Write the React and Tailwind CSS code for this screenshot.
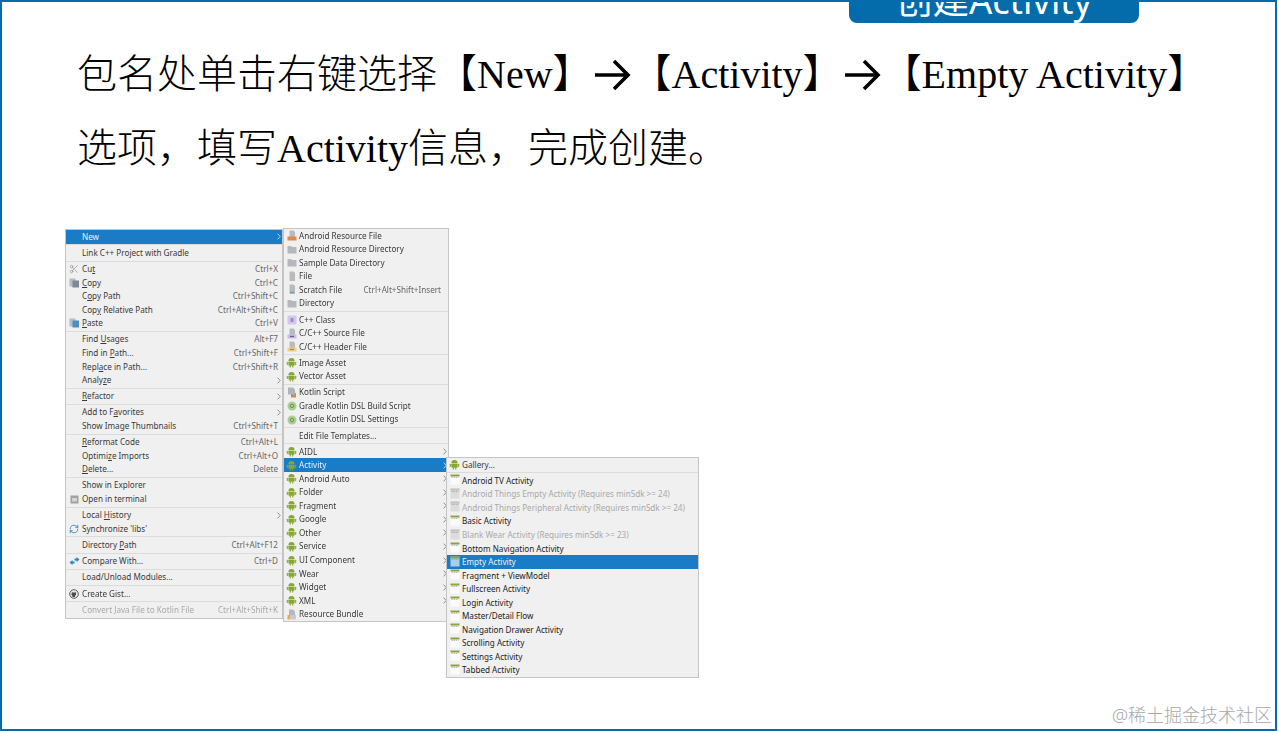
import { Scissors, RefreshCw } from "lucide-react";

const menuFont = { fontFamily: '"Noto Sans", "Liberation Sans", sans-serif' };

function Android() {
  return (
    <svg width="11" height="11" viewBox="0 0 11 11">
      <path d="M2.4 4.2a3.1 3.1 0 0 1 6.2 0z" fill="#84a832" />
      <rect x="2.4" y="4.7" width="6.2" height="4" rx="0.6" fill="#84a832" />
      <rect x="0.8" y="4.7" width="1.1" height="3.2" rx="0.5" fill="#84a832" />
      <rect x="9.1" y="4.7" width="1.1" height="3.2" rx="0.5" fill="#84a832" />
      <rect x="3.7" y="8.4" width="1.2" height="2.2" rx="0.5" fill="#84a832" />
      <rect x="6.1" y="8.4" width="1.2" height="2.2" rx="0.5" fill="#84a832" />
    </svg>
  );
}

function Template({ tone = "green" }) {
  const top = tone === "gray" ? "#c4c4c4" : "#8ba23e";
  const body = tone === "blue" ? "#a9cdea" : tone === "gray" ? "#dcdcdc" : "#fbfbfb";
  return (
    <svg width="10" height="11" viewBox="0 0 10 11" className="-mt-[2px]">
      <rect x="0.5" y="0.5" width="9" height="10" fill={body} />
      <rect x="0.5" y="0.5" width="9" height="2" fill={top} />
      <path d="M1.500 3.400h7" stroke="#9a9a9a" strokeWidth="0.700" strokeDasharray="1.500 0.700" />
    </svg>
  );
}

function Folder() {
  return (
    <svg width="10" height="9" viewBox="0 0 10 9">
      <path d="M0.500 1h3.400l1 1h4.600v6.500h-9z" fill="#b4b8bc" />
    </svg>
  );
}

function FileIcon({ bar, label }) {
  return (
    <svg width="10" height="11" viewBox="0 0 10 11">
      <path d="M2.500 0.500h4l1.500 1.500v8h-5.500z" fill="#b8babc" />
      {bar && <rect x="0.500" y="6.500" width="9" height="4" fill={bar} />}
      {label && <rect x="3" y="7.800" width="4" height="1.300" fill={label} />}
    </svg>
  );
}

function ClassIcon() {
  return (
    <svg width="10" height="10" viewBox="0 0 10 10">
      <rect x="0.500" y="0.500" width="9" height="9" rx="0.800" fill="#d5c8ee" />
      <rect x="3.500" y="3" width="3" height="4" fill="#8a70b8" opacity="0.700" />
    </svg>
  );
}

function GradleIcon() {
  return (
    <svg width="10" height="10" viewBox="0 0 10 10">
      <circle cx="5" cy="5" r="4.500" fill="#a9cf8f" />
      <circle cx="5" cy="5" r="1.700" fill="none" stroke="#5f7f55" strokeWidth="0.800" />
    </svg>
  );
}

function CopyIcon({ tone }) {
  return (
    <svg width="11" height="10" viewBox="0 0 11 10">
      <rect x="0.500" y="0.500" width="6" height="8" fill="#b6bcc2" />
      <rect x="3.500" y="2.500" width="6.500" height="7" fill={tone} />
    </svg>
  );
}

function TerminalIcon() {
  return (
    <svg width="9" height="9" viewBox="0 0 9 9">
      <rect x="0.500" y="0.500" width="8" height="8" fill="#a0a0a0" />
      <rect x="2" y="3" width="5" height="3.500" fill="#d4d4d4" />
    </svg>
  );
}

function CompareIcon() {
  return (
    <svg width="11" height="10" viewBox="0 0 11 10">
      <path d="M0.500 6.500l3-2.500v1.500h2v2h-2v1.500z" fill="#2b86d0" />
      <path d="M10.500 3.500l-3 2.500v-1.500h-2v-2h2v-1.500z" fill="#2b86d0" />
    </svg>
  );
}

function GistIcon() {
  return (
    <svg width="10" height="10" viewBox="0 0 10 10">
      <circle cx="5" cy="5" r="4.300" fill="#e8e8e8" stroke="#4a4a4a" strokeWidth="0.900" />
      <path d="M3 3l0.700 0.600h2.600l0.700-0.600v2.700l-1 1v1.300h-2.600v-1.300l-1-1z" fill="#4a4a4a" />
    </svg>
  );
}

function KotlinIcon() {
  return (
    <svg width="10" height="11" viewBox="0 0 10 11">
      <path d="M1 0.500h5l2 2v5h-7z" fill="#b0b4b8" />
      <path d="M4 10.500l5-5v5z" fill="#e8833a" />
      <path d="M4 10.500l3-3h-3z" fill="#4a8fd0" />
    </svg>
  );
}

function BundleIcon() {
  return (
    <svg width="10" height="11" viewBox="0 0 10 11">
      <path d="M2 0.500h4l2 2v4h-6z" fill="#b4b8bc" />
      <rect x="0.500" y="6" width="3" height="4.500" fill="#e7a85c" />
      <rect x="3.500" y="6" width="5.500" height="4.500" fill="#c5c9cd" />
    </svg>
  );
}

function Chevron({ active }) {
  return (
    <svg width="4" height="7" viewBox="0 0 4 7" className="shrink-0">
      <path d="M0.600 0.600l2.600 2.900-2.600 2.900" fill="none" stroke={active ? "#d5e6f5" : "#777"} strokeWidth="0.800" />
    </svg>
  );
}

// "_" marks the letter that gets the mnemonic underline
function Label({ text }) {
  const i = text.indexOf("_");
  if (i < 0) return <span>{text}</span>;
  return (
    <span>
      {text.slice(0, i)}
      <span className="underline underline-offset-1">{text[i + 1]}</span>
      {text.slice(i + 2)}
    </span>
  );
}

function Row({ item, textLeft }) {
  const { label, key2, keyPad, sub, icon, active, off, dark } = item;
  const color = active ? "text-[#e8f1f9]" : off ? "text-[#a9a9a9]" : dark ? "text-[#222222]" : "text-[#3a3a3a]";
  return (
    <div className={`flex items-center h-[13.55px] whitespace-nowrap ${color} ${active ? "bg-[#1a7cc6]" : ""}`}>
      <div className="flex items-center justify-center shrink-0" style={{ width: textLeft }}>
        {icon}
      </div>
      <Label text={label} />
      <div className="flex-1" />
      {key2 && (
        <span className={`${keyPad ? "pr-[7px]" : "pr-[4px]"} ${off ? "text-[#a9a9a9]" : "text-[#666666]"}`}>{key2}</span>
      )}
      {sub && (
        <div className="pr-[1px] pl-[1px]">
          <Chevron active={active} />
        </div>
      )}
    </div>
  );
}

function Menu({ items, textLeft, sepClass = "h-[2.55px]", className }) {
  return (
    <div
      className={`bg-[#f0f0f0] border border-[#c4c4c4] text-[8.15px] leading-none shrink-0 ${className}`}
      style={menuFont}
    >
      {items.map((item, idx) =>
        item === "-" ? (
          <div key={idx} className={`${sepClass} flex items-center`}>
            <div className="w-full h-[1px] bg-[#dcdcdc]" />
          </div>
        ) : (
          <Row key={idx} item={item} textLeft={textLeft} />
        )
      )}
    </div>
  );
}

const menuOne = [
  { label: "New", sub: true, active: true },
  "-",
  { label: "Link C++ Project with Gradle" },
  "-",
  { label: "Cu_t", key2: "Ctrl+X", icon: <Scissors size={10} color="#8a8a8a" strokeWidth={1.5} /> },
  { label: "_Copy", key2: "Ctrl+C", icon: <CopyIcon tone="#7c8a96" /> },
  { label: "C_opy Path", key2: "Ctrl+Shift+C" },
  { label: "Cop_y Relative Path", key2: "Ctrl+Alt+Shift+C" },
  { label: "_Paste", key2: "Ctrl+V", icon: <CopyIcon tone="#4d8fc4" /> },
  "-",
  { label: "Find _Usages", key2: "Alt+F7" },
  { label: "Find in _Path...", key2: "Ctrl+Shift+F" },
  { label: "Repl_ace in Path...", key2: "Ctrl+Shift+R" },
  { label: "Analy_ze", sub: true },
  "-",
  { label: "_Refactor", sub: true },
  "-",
  { label: "Add to F_avorites", sub: true },
  { label: "Show Image Thumbnails", key2: "Ctrl+Shift+T" },
  "-",
  { label: "_Reformat Code", key2: "Ctrl+Alt+L" },
  { label: "Optimi_ze Imports", key2: "Ctrl+Alt+O" },
  { label: "_Delete...", key2: "Delete" },
  "-",
  { label: "Show in Explorer" },
  { label: "Open in terminal", icon: <TerminalIcon /> },
  "-",
  { label: "Local _History", sub: true },
  { label: "Synchronize 'libs'", icon: <RefreshCw size={10} color="#2f7fc4" strokeWidth={2} /> },
  "-",
  { label: "Directory _Path", key2: "Ctrl+Alt+F12" },
  "-",
  { label: "Compare With...", key2: "Ctrl+D", icon: <CompareIcon /> },
  "-",
  { label: "Load/Unload Modules..." },
  "-",
  { label: "Create Gist...", icon: <GistIcon /> },
  "-",
  { label: "Convert Java File to Kotlin File", key2: "Ctrl+Alt+Shift+K", off: true },
];

const android = <Android />;

const menuTwo = [
  { label: "Android Resource File", icon: <FileIcon bar="#e08a4a" /> },
  { label: "Android Resource Directory", icon: <Folder /> },
  { label: "Sample Data Directory", icon: <Folder /> },
  { label: "File", icon: <FileIcon /> },
  { label: "Scratch File", key2: "Ctrl+Alt+Shift+Insert", keyPad: true, icon: <FileIcon label="#5a9fd0" /> },
  { label: "Directory", icon: <Folder /> },
  "-",
  { label: "C++ Class", icon: <ClassIcon /> },
  { label: "C/C++ Source File", icon: <FileIcon bar="#c9bce6" label="#6a5a9a" /> },
  { label: "C/C++ Header File", icon: <FileIcon bar="#f0cf85" label="#a98a3a" /> },
  "-",
  { label: "Image Asset", icon: android },
  { label: "Vector Asset", icon: android },
  "-",
  { label: "Kotlin Script", icon: <KotlinIcon /> },
  { label: "Gradle Kotlin DSL Build Script", icon: <GradleIcon /> },
  { label: "Gradle Kotlin DSL Settings", icon: <GradleIcon /> },
  "-",
  { label: "Edit File Templates..." },
  "-",
  { label: "AIDL", sub: true, icon: android },
  { label: "Activity", sub: true, active: true, icon: android },
  { label: "Android Auto", sub: true, icon: android },
  { label: "Folder", sub: true, icon: android },
  { label: "Fragment", sub: true, icon: android },
  { label: "Google", sub: true, icon: android },
  { label: "Other", sub: true, icon: android },
  { label: "Service", sub: true, icon: android },
  { label: "UI Component", sub: true, icon: android },
  { label: "Wear", sub: true, icon: android },
  { label: "Widget", sub: true, icon: android },
  { label: "XML", sub: true, icon: android },
  { label: "Resource Bundle", icon: <BundleIcon /> },
];

const green = <Template />;
const grayed = <Template tone="gray" />;

const menuThree = [
  { label: "Gallery...", icon: android },
  "-",
  { label: "Android TV Activity", icon: green, dark: true },
  { label: "Android Things Empty Activity (Requires minSdk >= 24)", icon: grayed, off: true },
  { label: "Android Things Peripheral Activity (Requires minSdk >= 24)", icon: grayed, off: true },
  { label: "Basic Activity", icon: green, dark: true },
  { label: "Blank Wear Activity (Requires minSdk >= 23)", icon: grayed, off: true },
  { label: "Bottom Navigation Activity", icon: green, dark: true },
  { label: "Empty Activity", icon: <Template tone="blue" />, active: true },
  { label: "Fragment + ViewModel", icon: green, dark: true },
  { label: "Fullscreen Activity", icon: green, dark: true },
  { label: "Login Activity", icon: green, dark: true },
  { label: "Master/Detail Flow", icon: green, dark: true },
  { label: "Navigation Drawer Activity", icon: green, dark: true },
  { label: "Scrolling Activity", icon: green, dark: true },
  { label: "Settings Activity", icon: green, dark: true },
  { label: "Tabbed Activity", icon: green, dark: true },
];

function Arrow() {
  return (
    <svg width="39" height="40" viewBox="0 0 39 40" className="inline-block align-[-7px]">
      <path d="M2 20h32M21 6l14 14-14 14" fill="none" stroke="#000" strokeWidth="3.600" />
    </svg>
  );
}

export default function App() {
  return (
    <div className="relative w-[1277px] h-[731px] bg-white border-2 border-[#046cab] overflow-hidden">
      {/* section tab, cut off by the top of the slide */}
      <div className="flex justify-end pr-[136px] -mt-[2px]">
        <div
          className="w-[290px] h-[23px] bg-[#046cab] rounded-b-[8px] overflow-hidden flex justify-center items-end text-white text-[36.5px] leading-none pb-[5px]"
          style={{ fontFamily: '"Noto Sans", "Noto Sans CJK SC", sans-serif' }}
        >
          <span className="whitespace-nowrap">创建Activity</span>
        </div>
      </div>

      <div
        className="pl-[75px] pt-[15px] text-[40px] leading-[74px] text-black font-light whitespace-nowrap"
        style={{ fontFamily: '"Liberation Serif", "Noto Sans CJK SC", serif' }}
      >
        <div>
          包名处单击右键选择【New】
          <Arrow />
          【Activity】
          <Arrow />
          【Empty Activity】
        </div>
        <div>选项，填写Activity信息，完成创建。</div>
      </div>

      <div className="flex items-start pl-[63px] mt-[42px] blur-[0.35px]">
        <Menu items={menuOne} textLeft={16} sepClass="h-[2.65px]" className="w-[218px] mt-[1px] pb-[1px]" />
        <Menu items={menuTwo} textLeft={15} className="w-[166px]" />
        <Menu items={menuThree} textLeft={15} className="w-[253px] -ml-[3px] mt-[229px] relative" />
      </div>

      <div
        className="absolute right-[3px] bottom-[5px] text-[18px] leading-none text-[#a8a8a8] font-light"
        style={{ fontFamily: '"Noto Sans", "Noto Sans CJK SC", sans-serif' }}
      >
        @稀土掘金技术社区
      </div>
    </div>
  );
}
